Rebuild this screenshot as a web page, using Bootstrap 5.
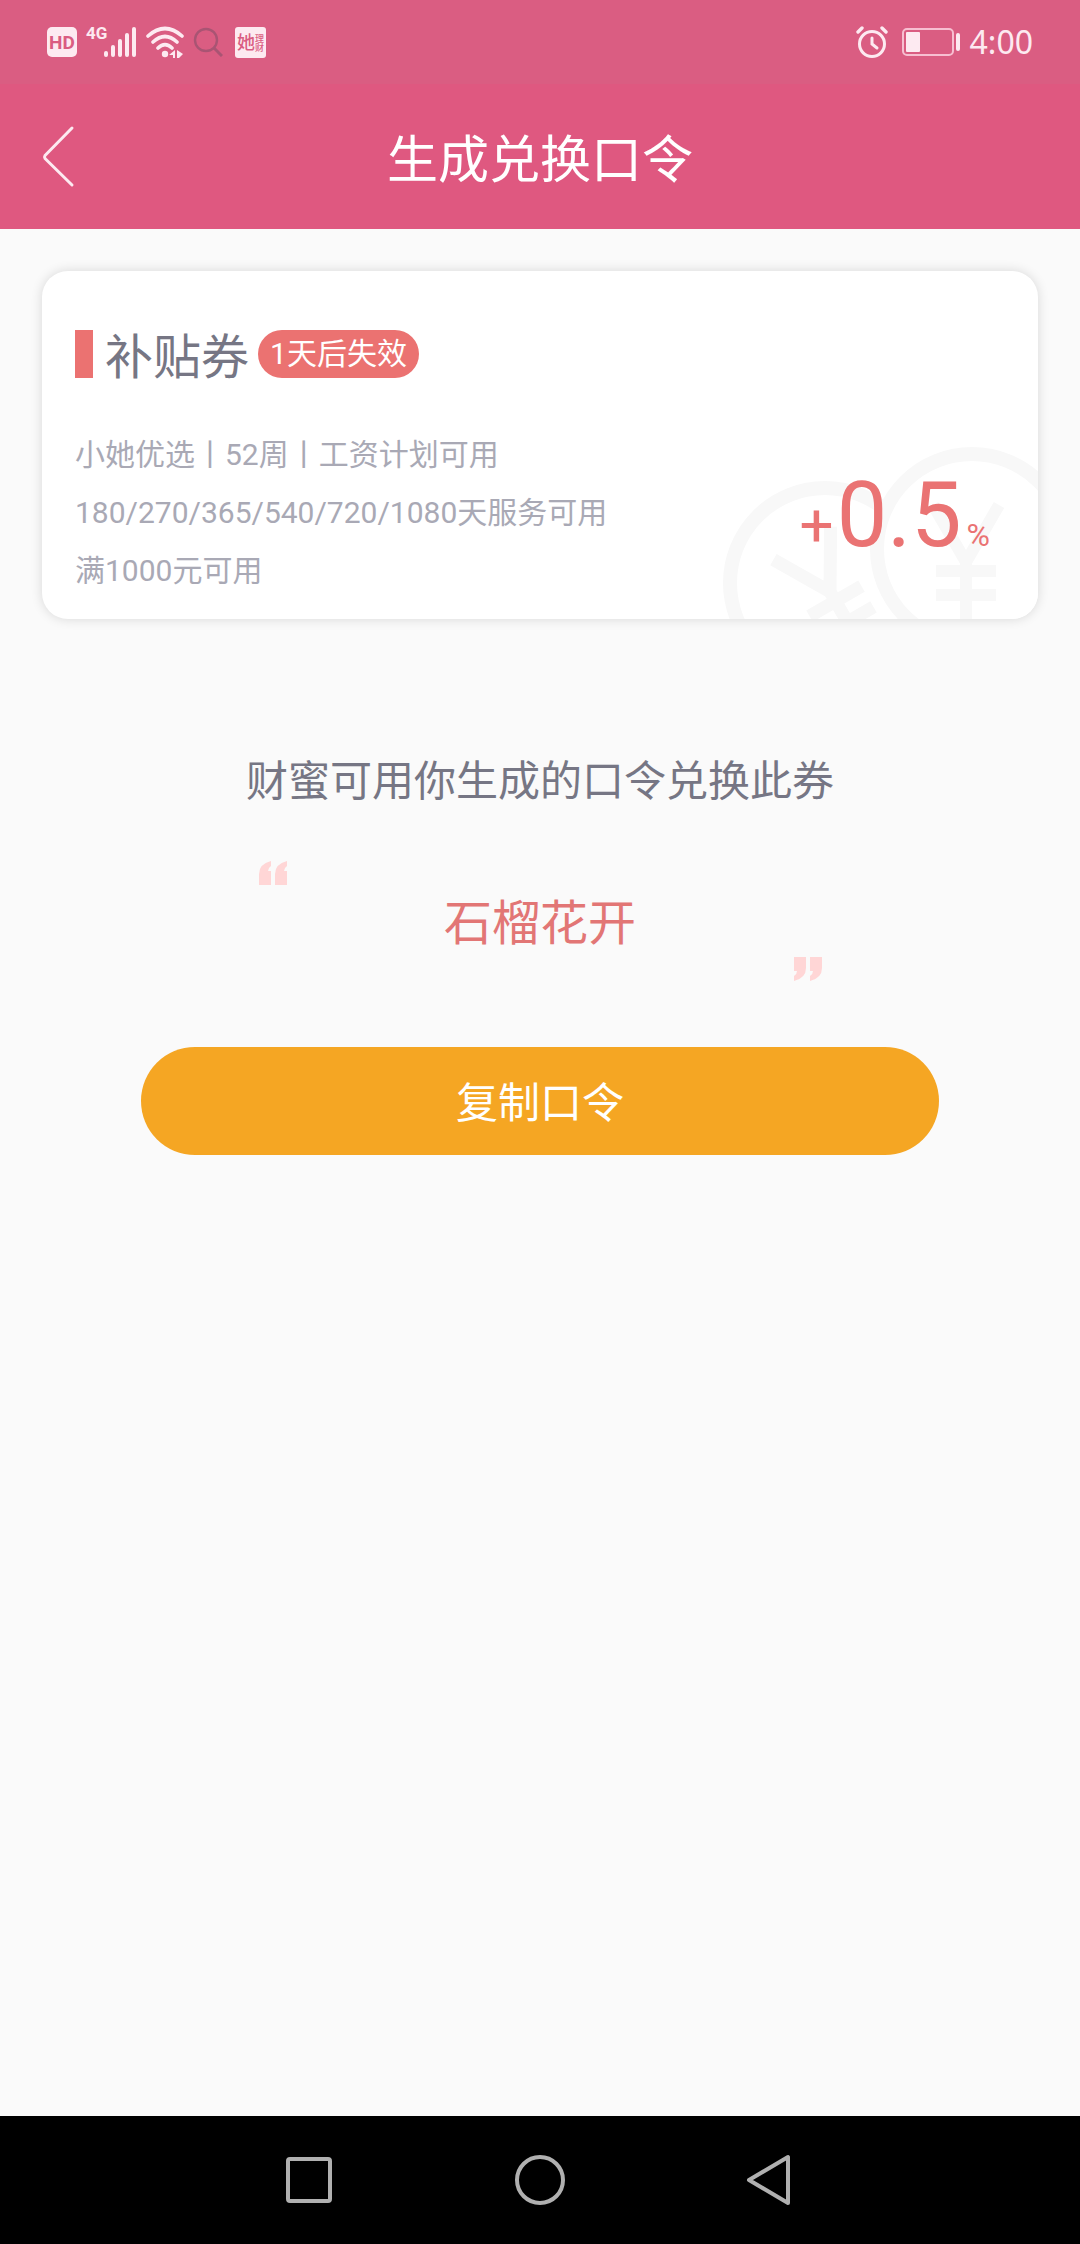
<!DOCTYPE html>
<html lang="zh-CN">
<head>
<meta charset="utf-8">
<meta name="viewport" content="width=device-width, initial-scale=1">
<title>生成兑换口令</title>
<link href="https://cdn.jsdelivr.net/npm/bootstrap@5.3.0/dist/css/bootstrap.min.css" rel="stylesheet">
<style>
  body { font-family: Roboto, "Noto Sans CJK SC", sans-serif; background: #fafafa; color: #767684; }
  svg { display: block; flex: none; }
  .status-bar { height: 84px; padding: 0 47px; background: #da5d82; color: #fdeaf1; }
  .clock { font: 32px/40px "Noto Sans", sans-serif; }
  .wifi-icon { margin-left: 6px; }
  .app-icon { margin-left: 12px; }
  .battery-icon { margin: 0 8px 0 14px; }
  .app-bar { height: 145px; padding: 0 30px; background: #df5880; }
  .app-title { font-size: 51px; line-height: 72px; padding-top: 8px; color: #fff; }
  .side { width: 60px; }
  .screen { padding: 42px; }
  .coupon { border: 0; border-radius: 26px; box-shadow: 0 0 12px rgba(0,0,0,.14); padding: 49px 48px 19px 33px; overflow: hidden; }
  .coins { position: absolute; right: 0; bottom: 0; }
  .marker { width: 18px; height: 48px; background: #eb7271; }
  .coupon-name { font-size: 48px; line-height: 60px; padding-top: 8px; margin: 0 9px 0 12px; color: #767684; font-weight: 400; }
  .expiry { font-size: 30px; line-height: 48px; padding: 0 12px; font-weight: 400; background: #eb7271; color: #fff; }
  .coupon-body { margin-top: 38px; }
  .terms { font-size: 30px; line-height: 58px; color: #a9a9b5; }
  .rate { color: #ea7373; line-height: 96px; padding-bottom: 17px; }
  .rate-sign { font-size: 60px; }
  .rate-value { font-size: 90px; margin: 0 5px 0 3px; }
  .rate-unit { font-size: 32px; }
  .hint { font-size: 42px; line-height: 60px; margin-top: 133px; }
  .phrase { width: 564px; max-width: 100%; margin-top: 49px; }
  .phrase-text { font-size: 48px; line-height: 66px; padding-top: 6px; color: #e27675; }
  .copy-btn, .copy-btn:hover { width: 798px; max-width: 100%; height: 108px; margin-top: 66px; padding: 10px 12px 6px; font-size: 42px; background: #f5a623; color: #fff; border: 0; }
  .nav-keys { height: 128px; padding: 0 240px; background: #000; }
</style>
</head>
<body>
<div class="d-flex flex-column min-vh-100">
  <div class="status-bar d-flex align-items-center justify-content-between">
    <div class="d-flex align-items-center">
      <svg width="30" height="30" viewBox="0 0 30 30" role="img" aria-label="HD"><rect width="30" height="30" rx="5" fill="#fdeaf1"/><text x="15" y="22" text-anchor="middle" font-family="Roboto" font-weight="700" font-size="19" fill="#da5d82">HD</text></svg>
      <svg class="ms-2" width="54" height="36" viewBox="0 0 54 36" fill="#fdeaf1" role="img" aria-label="4G"><text x="1" y="15" font-family="Roboto" font-weight="700" font-size="17">4G</text><rect x="19" y="27" width="4" height="6" rx="2"/><rect x="26" y="21" width="4" height="12" rx="2"/><rect x="33" y="15" width="4" height="18" rx="2"/><rect x="40" y="9" width="4" height="24" rx="2"/><rect x="47" y="3" width="4" height="30" rx="2"/></svg>
      <svg class="wifi-icon" width="40" height="32" viewBox="0 0 40 32" fill="none" stroke="#fdeaf1" stroke-width="3.6" stroke-linecap="round"><path d="M3 10Q20-5 37 10M8 16Q20 5 32 16M13 22Q20 15 27 22"/><circle cx="20" cy="28" r="3.2" fill="#fdeaf1" stroke="none"/><path d="M30 24v8h-2v-3h-4zM32 24l6 4-4 4h-2z" fill="#fdeaf1" stroke="none"/></svg>
      <svg class="ms-2" width="30" height="30" viewBox="0 0 30 30" fill="none" stroke="#a95473" stroke-width="2.4"><circle cx="13" cy="13" r="11"/><path d="M21 21l8 8" stroke-width="3"/></svg>
      <svg class="app-icon" width="31" height="31" viewBox="0 0 31 31" role="img" aria-label="她理财"><rect width="31" height="31" rx="3" fill="#fdeaf1"/><g font-family="Noto Sans CJK SC" font-weight="500" fill="#da5d82"><text x="2" y="22" font-size="18">她</text><text x="20" y="15" font-size="9">理</text><text x="20" y="24" font-size="9">财</text></g></svg>
    </div>
    <div class="d-flex align-items-center">
      <svg width="32" height="32" viewBox="0 0 32 32" fill="none" stroke="#fdeaf1" stroke-linecap="round"><circle cx="16" cy="18" r="12.5" stroke-width="3"/><path d="M16 12v6l5 4" stroke-width="3"/><path d="M2 6l4-4M26 2l4 4" stroke-width="3.4"/></svg>
      <svg class="battery-icon" width="60" height="30" viewBox="0 0 60 30"><rect x="1" y="2" width="50" height="26" rx="4" fill="none" stroke="#f7bfd1" stroke-width="2"/><rect x="4" y="5" width="14" height="20" rx="1" fill="#fdeaf1"/><rect x="54" y="6" width="4" height="18" rx="2" fill="#fdeaf1"/></svg>
      <span class="clock">4:00</span>
    </div>
  </div>

  <header class="app-bar d-flex align-items-center justify-content-between">
    <button class="side btn p-0 border-0" type="button" aria-label="返回"><svg width="60" height="64" viewBox="0 0 60 64" fill="none" stroke="#fdeaf1" stroke-width="3" stroke-linecap="round" stroke-linejoin="round"><path d="M42 3L15 30.500Q14 32 15 33.500L42 60"/></svg></button>
    <h1 class="app-title fw-normal m-0">生成兑换口令</h1>
    <span class="side"></span>
  </header>

  <main class="screen flex-grow-1 d-flex flex-column align-items-stretch">
    <section class="card coupon">
      <svg class="coins" width="320" height="180" viewBox="718 439 320 180" fill="none" stroke="#f8f8f8" stroke-width="14"><circle cx="825" cy="583" r="95"/><g transform="translate(825 583) rotate(-30)" stroke-width="13"><path d="M-33-46L0 10L33-46M0 8V70M-30 21H30M-30 45H30"/></g><circle cx="972" cy="549" r="95" fill="#fff"/><path d="M933 505L966 562L999 505M966 560V620M936 571H996M936 595H996" stroke-width="12"/></svg>
      <div class="d-flex align-items-center position-relative">
        <span class="marker"></span>
        <h2 class="coupon-name">补贴券</h2>
        <span class="badge rounded-pill expiry">1天后失效</span>
      </div>
      <div class="coupon-body d-flex align-items-end justify-content-between position-relative">
        <div class="terms">
          <div>小她优选丨52周丨工资计划可用</div>
          <div>180/270/365/540/720/1080天服务可用</div>
          <div>满1000元可用</div>
        </div>
        <div class="rate d-flex align-items-baseline"><span class="rate-sign">+</span><span class="rate-value">0.5</span><span class="rate-unit">%</span></div>
      </div>
    </section>

    <section class="d-flex flex-column align-items-center">
      <p class="hint mb-0">财蜜可用你生成的口令兑换此券</p>
      <div class="phrase d-flex flex-column">
        <svg class="align-self-start" width="31" height="24" viewBox="-1 0 31 24" fill="#ffd6d6"><path d="M0 24V13Q0 3 12 0V5Q9 7 9 10H12V24ZM16 24V13Q16 3 28 0V5Q25 7 25 10H28V24Z"/></svg>
        <div class="phrase-text text-center">石榴花开</div>
        <svg class="align-self-end" width="29" height="24" viewBox="0 0 29 24" fill="#ffd6d6"><path transform="rotate(180 14.500 12)" d="M0 24V13Q0 3 12 0V5Q9 7 9 10H12V24ZM16 24V13Q16 3 28 0V5Q25 7 25 10H28V24Z"/></svg>
      </div>
      <button class="btn rounded-pill copy-btn" type="button">复制口令</button>
    </section>
  </main>

  <nav class="nav-keys d-flex align-items-center justify-content-between">
    <button class="btn border-0 p-0" type="button" aria-label="最近任务"><svg width="138" height="54" viewBox="0 0 138 54" fill="none" stroke="#b0b0b0" stroke-width="4"><rect x="48" y="6" width="42" height="42" rx="2"/></svg></button>
    <button class="btn border-0 p-0" type="button" aria-label="主页"><svg width="138" height="54" viewBox="0 0 138 54" fill="none" stroke="#b0b0b0" stroke-width="4"><circle cx="69" cy="27" r="23"/></svg></button>
    <button class="btn border-0 p-0" type="button" aria-label="返回上一页"><svg width="138" height="54" viewBox="0 0 138 54" fill="none" stroke="#b0b0b0" stroke-width="4" stroke-linejoin="round"><path d="M86 4V50L47 27Z"/></svg></button>
  </nav>
</div>
<script src="https://cdn.jsdelivr.net/npm/bootstrap@5.3.0/dist/js/bootstrap.bundle.min.js"></script>
</body>
</html>
